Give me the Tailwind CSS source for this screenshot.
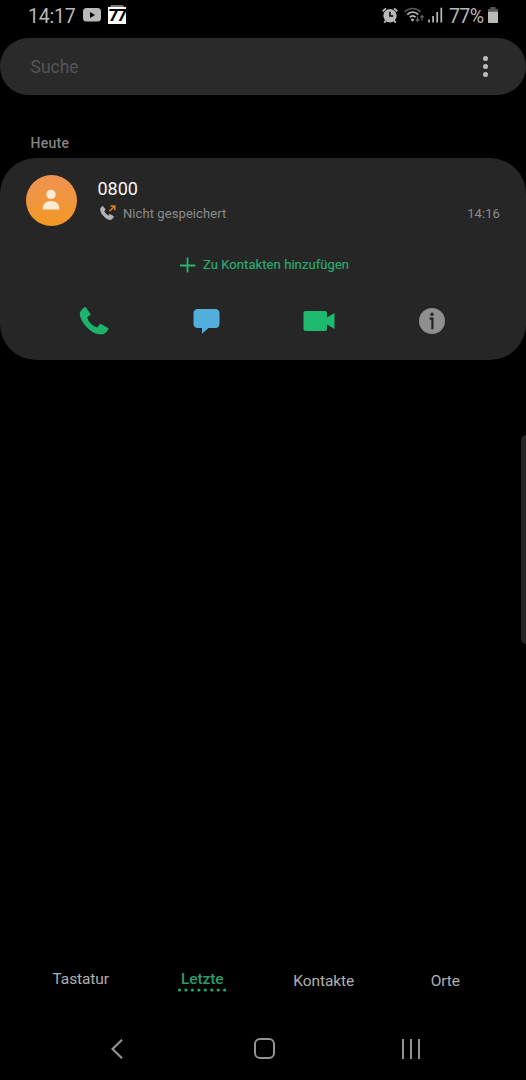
<!DOCTYPE html>
<html lang="de">
<head>
  <meta charset="UTF-8">
  <meta name="viewport" content="width=device-width, initial-scale=1.0">
  <title>Telefon - Letzte</title>
  <script src="https://cdn.jsdelivr.net/npm/@tailwindcss/browser@4"></script>
</head>
<body class="bg-black">
  <div class="relative flex h-[1080px] w-[526px] flex-col overflow-hidden bg-black font-['Roboto',sans-serif]">

    <!-- Statusleiste -->
    <header class="flex h-[38px] shrink-0 items-start justify-between pl-[28px] pr-[28px] text-[#b9b9b9]">
      <div class="flex h-8 items-center">
        <span class="w-[55px] pt-px text-[19.5px] leading-8 tracking-[-0.2px]">14:17</span>
        <svg class="-mt-[2px] h-[14px] w-[18px]" viewBox="0 0 18 14">
          <rect width="18" height="13.5" rx="3.5" fill="#b9b9b9"/>
          <path d="M7 4v6l5-3z" fill="#000"/>
        </svg>
        <div class="ml-[7px] -mt-[3px] flex h-[19px] w-[18px] flex-col items-center">
          <div class="h-[2px] w-[14px] shrink-0 rounded-t bg-[#777]"></div>
          <div class="h-[17px] w-[18px] bg-white text-center font-['Inter',sans-serif] text-[16.5px] leading-[17px] font-bold tracking-[-1.5px] text-black">77</div>
        </div>
      </div>
      <div class="flex h-8 items-center">
        <svg class="-mt-[2px] h-[17px] w-[16px]" viewBox="0 0 16 17">
          <path d="M.7 4.2 4 1.4M15.3 4.2 12 1.4M4 13.5l-1.8 2.2M12 13.5l1.8 2.2" stroke="#b9b9b9" stroke-width="1.9" fill="none"/>
          <circle cx="8" cy="8.8" r="6.7" fill="#b9b9b9"/>
          <path d="M8 4.8v4.2h3.200" stroke="#000" stroke-width="1.5" fill="none"/>
        </svg>
        <svg class="-mt-[2px] ml-[6px] h-[16px] w-[21px]" viewBox="0 0 21 16">
          <g fill="none" stroke-width="1.7">
            <path d="M.8 4.8C5 .4 12.2.4 16.6 4.8" stroke="#5c5c5c"/>
            <path d="M3.2 7.6c3-3.2 8-3.2 11 0" stroke="#b0b0b0"/>
            <path d="M5.800 10.300c1.700-1.800 4.200-1.800 5.800 0" stroke="#b9b9b9"/>
            <path d="M13.5 9.500v4.500m-1.700-1.500 1.700 1.700 1.700-1.700M18 13.500V8.500m-1.700 1.900L18 8.700l1.700 1.700" stroke="#666" stroke-width="1.2"/>
          </g>
          <circle cx="8.5" cy="12.900" r="1.4" fill="#b9b9b9"/>
        </svg>
        <svg class="-mt-[3px] ml-[3px] h-[16px] w-[15px]" viewBox="0 0 15 16">
          <path d="M1 12.5v3M5.100 9v6.500M9.200 5v10.500M13.300.8v14.700" stroke="#b9b9b9" stroke-width="1.7"/>
        </svg>
        <span class="ml-[6px] w-[39px] pt-px text-[19.5px] leading-8 tracking-[-0.6px]">77%</span>
        <svg class="-mt-[2px] h-[16px] w-[10px]" viewBox="0 0 10 16">
          <path d="M0 4.500V2.500q0-.7.7-.7H2.500V0h5v1.800h1.800q.7 0 .7.700V4.500z" fill="#555"/>
          <path d="M0 4.500h10v10.700q0 .8-.8.8H.8q-.8 0-.8-.8z" fill="#b9b9b9"/>
        </svg>
      </div>
    </header>

    <!-- Suche -->
    <div class="flex h-[56.5px] shrink-0 items-center justify-between rounded-full bg-[#2a2a2a] pl-[30.5px] pr-[38px]">
      <span class="pt-[2px] text-[17.5px] text-[#555]">Suche</span>
      <div class="flex flex-col gap-[3px]">
        <span class="size-[5px] rounded-full bg-[#bcbcbc]"></span>
        <span class="size-[5px] rounded-full bg-[#bcbcbc]"></span>
        <span class="size-[5px] rounded-full bg-[#bcbcbc]"></span>
      </div>
    </div>

    <h2 class="mt-[38.5px] h-[25px] shrink-0 pl-[30.5px] text-[14px] leading-5 font-medium tracking-[0.3px] text-[#858585]">Heute</h2>

    <!-- Anruf -->
    <section class="flex h-[202px] shrink-0 flex-col rounded-[36px] bg-[#262626]">
      <div class="flex h-[85px] items-start pl-[26px] pr-[26px] pt-[17px]">
        <div class="flex size-[51px] items-center justify-center rounded-full bg-linear-to-b from-[#ee9350] to-[#f3981f]">
          <svg class="-mt-px mr-px h-[22px] w-[18px]" viewBox="0 0 18 22">
            <circle cx="9" cy="5.4" r="4.7" fill="#fdebd5"/>
            <path d="M.8 20.500v-1.500c0-4.200 3.500-7 8.200-7s8.200 2.800 8.200 7v1.500z" fill="#fdebd5"/>
          </svg>
        </div>
        <div class="ml-[20.5px] flex flex-1 flex-col">
          <p class="h-[27px] text-[18px] leading-[27px] text-[#f5f5f5]">0800</p>
          <div class="flex h-[22px] items-center text-[13px] text-[#8c8c8c]">
            <svg class="ml-[2.5px] mr-[7px] h-[16px] w-[16px]" viewBox="0 0 16 16">
              <path d="M.6 4.300Q.8 2.200 2.700 1.300L5.200 4.600 3.800 6.200q1.300 3.300 4.500 4.700l1.500-1.500 3.700 2.200q-1 2.800-3.300 2.900Q7.500 14.600 4 11.300.6 7.800.6 4.300z" fill="#b4b4b4" stroke="#b4b4b4" stroke-width=".9" stroke-linejoin="round"/>
              <path d="M9.500 6.200 14.700 1M10.500 1h4.300v4.300" fill="none" stroke="#d98324" stroke-width="1.5"/>
            </svg>
            <span class="flex-1 pt-px tracking-[0.08px]">Nicht gespeichert</span>
            <span class="pt-px tracking-[0.1px]">14:16</span>
          </div>
        </div>
      </div>

      <button class="flex h-[44px] items-center pl-[180px] text-[13px] text-[#29a970]">
        <svg class="mr-[7px] h-[16px] w-[16px]" viewBox="0 0 16 16">
          <path d="M7.500 .5v15M0 8.500h15.500" stroke="#22b573" stroke-width="1.800"/>
        </svg>
        <span class="-mt-px tracking-[0.08px] [-webkit-text-stroke:0.2px_#29a970]">Zu Kontakten hinzufügen</span>
      </button>

      <div class="grid h-[68px] grid-cols-4 items-center justify-items-center px-[38px]">
        <svg class="h-[30px] w-[30px]" viewBox="0 0 30 30">
          <path d="M.8 6.500Q2.200 3 5.500 1.200q.8-.5 1.400.2L11.400 7.800q.4.700-.1 1.300L8.200 11.200q1.600 7.200 10 10.300l2.500-3.200q.5-.7 1.300-.3l7 4q.8.500.4 1.300-1.600 2.900-4.600 4.700Q16.500 29.800 9 22.500.2 14 .8 6.500z" fill="#1cb46c"/>
        </svg>
        <svg class="h-[26px] w-[28px]" viewBox="0 0 28 26">
          <path d="M5 1h17q4.500 0 4.500 4.500v10q0 4.500-4.500 4.500H15.500l-6.500 5.800V20H5Q.5 20 .5 15.500v-10Q.5 1 5 1z" fill="#52aedb"/>
        </svg>
        <svg class="h-[20px] w-[32px]" viewBox="0 0 32 20">
          <path d="M2.500 0h19.500q2 0 2 2v4.500l7.500-4.500v16l-7.500-4.500V18q0 2-2 2H2.500q-2 0-2-2V2q0-2 2-2z" fill="#1cb96e"/>
        </svg>
        <svg class="-mt-px h-[26px] w-[26px]" viewBox="0 0 26 26">
          <circle cx="13" cy="13" r="13" fill="#8f8f8f"/>
          <circle cx="13" cy="6.300" r="1.700" fill="#222"/>
          <path d="M10.500 10.700h2.900v10.500" fill="none" stroke="#222" stroke-width="2.200"/>
        </svg>
      </div>
    </section>

    <!-- Kante des Seitenpanels -->
    <div class="absolute right-0 top-[435px] h-[209px] w-[5px] rounded-l-[5px] bg-[#242424]"></div>

    <div class="flex-1"></div>

    <!-- Tabs -->
    <nav class="grid h-[57px] shrink-0 grid-cols-4 justify-items-center px-5 text-[15.5px] leading-6 tracking-[-0.1px] text-[#b0b0b0]">
      <span class="mt-[6px]">Tastatur</span>
      <div class="mt-[6px] flex flex-col items-center">
        <span class="h-[21px] font-medium text-[#2a9d69]">Letzte</span>
        <svg class="h-[4px] w-[50px]" viewBox="0 0 50 4">
          <path d="M2.500 2H48" stroke="#27a56b" stroke-width="3.2" stroke-linecap="round" stroke-dasharray="0 6.450"/>
        </svg>
      </div>
      <span class="mt-[8px]">Kontakte</span>
      <span class="mt-[8px]">Orte</span>
    </nav>

    <!-- Navigationsleiste -->
    <footer class="grid h-[62px] shrink-0 grid-cols-3 items-center justify-items-center pl-[43.5px] pr-[41.5px]">
      <svg class="h-[20px] w-[12px]" viewBox="0 0 12 20">
        <path d="M11 .8 1.500 10 11 19.200" fill="none" stroke="#949494" stroke-width="2.2"/>
      </svg>
      <div class="-mt-px size-[21px] rounded-[6px] border-2 border-[#949494]"></div>
      <div class="flex h-[20px] gap-[6px]">
        <span class="w-[2px] bg-[#949494]"></span>
        <span class="w-[2px] bg-[#949494]"></span>
        <span class="w-[2px] bg-[#949494]"></span>
      </div>
    </footer>
  </div>
</body>
</html>
